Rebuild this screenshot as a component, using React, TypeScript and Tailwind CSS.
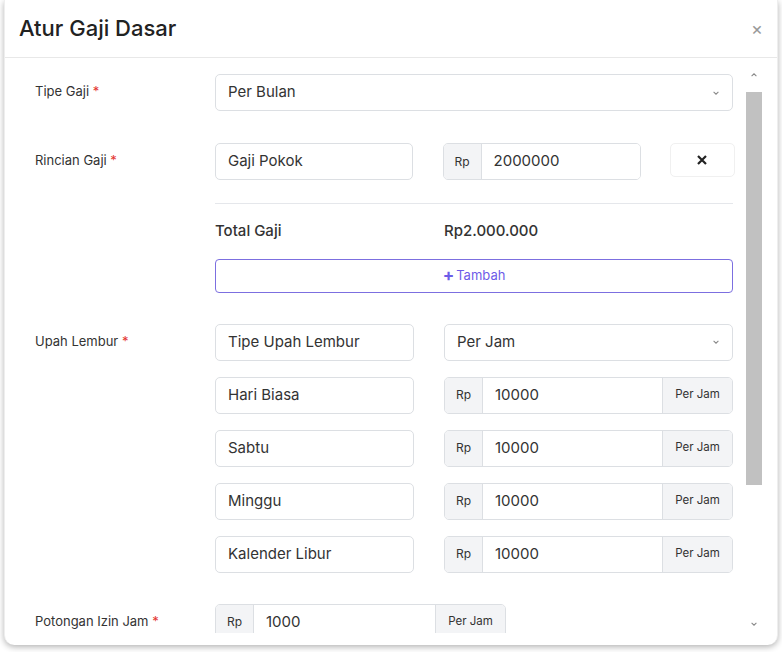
import React from "react";

const inputCls =
  "h-[37px] rounded-[5px] border border-[#dcdfe3] bg-white px-3 flex items-center text-[15px] text-[#333]";

function RpGroup({ value, suffix, w = "w-[289px]" }: { value: string; suffix?: boolean; w?: string }) {
  return (
    <div className={`h-[37px] ${w} flex rounded-[5px] border border-[#dcdfe3] overflow-hidden text-[#333]`}>
      <div className="w-[38px] bg-[#f3f4f6] border-r border-[#dcdfe3] flex items-center justify-center text-[12px]">Rp</div>
      <div className="flex-1 px-3 flex items-center text-[15px] bg-white">{value}</div>
      {suffix && (
        <div className="w-[70px] bg-[#f3f4f6] border-l border-[#dcdfe3] flex items-center justify-center text-[11.5px]">Per Jam</div>
      )}
    </div>
  );
}

function Label({ text, pad = true }: { text: string; pad?: boolean }) {
  return (
    <div className={`w-[180px] shrink-0 text-[13px] text-[#333] ${pad ? "pt-[8px]" : ""}`}>
      {text} <span className="text-[#e3342f]">*</span>
    </div>
  );
}

const Chevron = () => (
  <svg width="8" height="8" viewBox="0 0 10 10" fill="none" stroke="#888" strokeWidth="1.3">
    <path d="M2 3.5l3 3 3-3" />
  </svg>
);

export default function App() {
  const rows = ["Hari Biasa", "Sabtu", "Minggu", "Kalender Libur"];
  return (
    <div className="w-[782px] h-[652px] bg-white p-[4px] pt-0" style={{ fontFamily: "Inter, 'Noto Sans', sans-serif" }}>
      <div className="h-[645px] rounded-b-[10px] bg-white shadow-[0_2px_6px_rgba(0,0,0,0.3)] border-x border-[#eee] flex flex-col overflow-hidden">
        <div className="h-[58px] shrink-0 border-b border-[#e8e8e8] flex items-center justify-between pl-[14px] pr-[14px]">
          <div className="text-[22px] font-medium text-[#222]">Atur Gaji Dasar</div>
          <div className="text-[#999] text-[18px] leading-none">×</div>
        </div>
        <div className="flex-1 flex min-h-0 mb-[12px]">
          <div className="flex-1 overflow-hidden pl-[30px] pt-[16px] pr-[10px]">
            <div className="flex items-start">
              <Label text="Tipe Gaji" />
              <div className={`${inputCls} w-[518px] justify-between`}>
                <span>Per Bulan</span>
                <Chevron />
              </div>
            </div>
            <div className="flex items-start mt-[32px]">
              <Label text="Rincian Gaji" />
              <div className={`${inputCls} w-[199px]`}>Gaji Pokok</div>
              <div className="ml-[30px]"><RpGroup value="2000000" w="w-[198px]" /></div>
              <div className="ml-[29px] w-[66px] h-[34px] rounded-[5px] border border-[#f0f0f0] flex items-center justify-center">
                <svg width="10" height="10" viewBox="0 0 10 10" stroke="#222" strokeWidth="2.2"><path d="M1 1l8 8M9 1l-8 8" /></svg>
              </div>
            </div>
            <div className="ml-[180px] w-[518px] border-t border-[#e5e7eb] mt-[23px]" />
            <div className="ml-[180px] flex mt-[16px] text-[15px] font-medium text-[#333]">
              <div className="w-[229px]">Total Gaji</div>
              <div>Rp2.000.000</div>
            </div>
            <div className="ml-[180px] w-[518px] h-[34px] mt-[16px] rounded-[4px] border border-[#7c6fe0] flex items-center justify-center text-[13px] text-[#6d5ce8]">
              <span className="text-[17px] font-bold mr-[2px] leading-none">+</span>Tambah
            </div>
            <div className="flex items-start mt-[31px]">
              <Label text="Upah Lembur" />
              <div className="flex flex-col gap-[16px]">
                <div className="flex gap-[30px]">
                  <div className={`${inputCls} w-[199px]`}>Tipe Upah Lembur</div>
                  <div className={`${inputCls} w-[289px] justify-between`}>
                    <span>Per Jam</span>
                    <Chevron />
                  </div>
                </div>
                {rows.map((r) => (
                  <div key={r} className="flex gap-[30px]">
                    <div className={`${inputCls} w-[199px]`}>{r}</div>
                    <RpGroup value="10000" suffix />
                  </div>
                ))}
              </div>
            </div>
            <div className="flex items-center mt-[31px]">
              <Label text="Potongan Izin Jam" pad={false} />
              <RpGroup value="1000" suffix w="w-[291px]" />
            </div>
          </div>
          <div className="w-[17px] mr-[15px] mt-[8px] flex flex-col items-center">
            <div className="h-[18px] flex items-center rotate-180">
              <Chevron />
            </div>
            <div className="w-[16px] h-[393px] mt-[8px] bg-[#c1c1c1]" />
            <div className="flex-1" />
            <div className="h-[18px] flex items-center"><Chevron /></div>
          </div>
        </div>
      </div>
    </div>
  );
}
